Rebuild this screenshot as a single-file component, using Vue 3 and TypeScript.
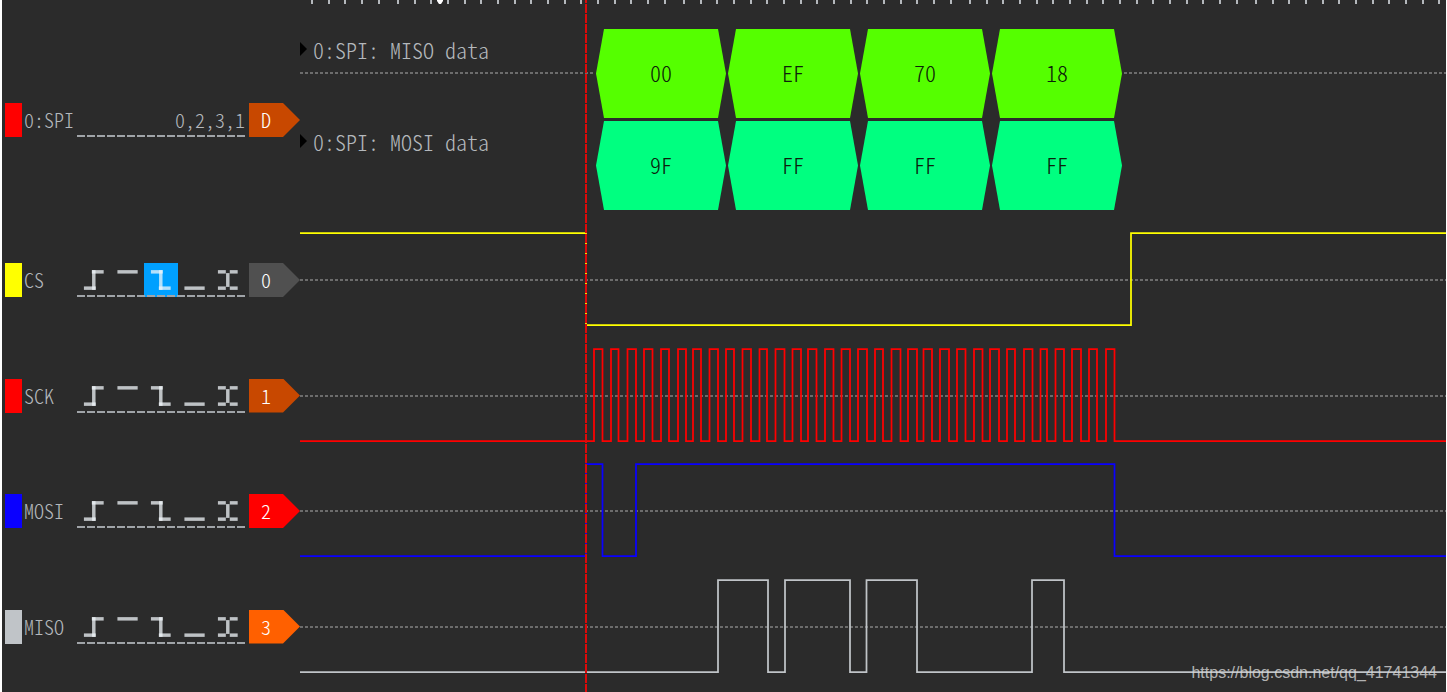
<script setup lang="ts">
import { ref } from 'vue'

type Trigger = 'rising' | 'high' | 'falling' | 'low' | 'either'

interface Channel {
  name: string
  index: number
  color: string
  badge: string
  trigger: Trigger | null
  startHigh: boolean
  edges: number[]
}

interface Lane {
  title: string
  kind: string
  bytes: string[]
}

const triggers: { id: Trigger; label: string; strokes: string[] }[] = [
  { id: 'rising', label: 'Rising edge', strokes: ['M7 25.25H19', 'M17 7V27', 'M15 8.75H27'] },
  { id: 'high', label: 'High level', strokes: ['M6.5 8.75H27'] },
  { id: 'falling', label: 'Falling edge', strokes: ['M7 8.75H19', 'M17 7V27', 'M15 25.25H27'] },
  { id: 'low', label: 'Low level', strokes: ['M6.5 25.25H27'] },
  {
    id: 'either',
    label: 'Either edge',
    strokes: ['M7 8.75H15', 'M19 8.75H27', 'M17 10V24', 'M7 25.25H15', 'M19 25.25H27'],
  },
]

const clockRises = [
  294, 311, 327.5, 344, 361, 378, 393, 409.5, 426, 442.5, 459.5, 475.5, 492.5, 508, 525, 541.5,
  558, 575, 591.5, 608, 623.5, 640, 657, 674, 690, 707, 724, 740.5, 755.5, 772, 789, 806,
]
const clockFalls = [
  302.5, 318.5, 336, 352.5, 369, 386, 401, 418, 434, 451, 467, 484.5, 501, 516.5, 533.5, 550,
  567, 583, 600.5, 617, 632, 649, 665.5, 682.5, 699, 715, 732.5, 747, 764, 781, 797, 814.5,
]

const channels = ref<Channel[]>([
  { name: 'CS', index: 0, color: '#ffff00', badge: '#505050', trigger: 'falling', startHigh: true, edges: [286, 831] },
  { name: 'SCK', index: 1, color: '#ff0000', badge: '#c84800', trigger: null, startHigh: false, edges: clockRises.flatMap((rise, i) => [rise, clockFalls[i]]) },
  { name: 'MOSI', index: 2, color: '#0a00ff', badge: '#ff0000', trigger: null, startHigh: false, edges: [286, 302.5, 336, 814.5] },
  { name: 'MISO', index: 3, color: '#c0c4c8', badge: '#ff6000', trigger: null, startHigh: false, edges: [418, 468, 485, 550, 566.5, 617, 732, 764] },
])

const lanes: Lane[] = [
  { title: '0:SPI: MISO data', kind: 'miso', bytes: ['00', 'EF', '70', '18'] },
  { title: '0:SPI: MOSI data', kind: 'mosi', bytes: ['9F', 'FF', 'FF', 'FF'] },
]

const END = 6000
const HIGH = 11
const LOW = 103

function tracePath(c: Channel): string {
  let level = c.startHigh
  let d = `M0 ${level ? HIGH : LOW}`
  for (const x of c.edges) {
    level = !level
    d += `H${x}V${level ? HIGH : LOW}`
  }
  return `${d}H${END}`
}

const ticks: number[] = []
for (let group = -189; group < END; group += 286) {
  for (let i = 0; i < 17; i++) {
    const x = group + Math.round((i * 50) / 3)
    if (x > 0) ticks.push(x)
  }
}
const tickPath = ticks.map((x) => `M${x + 1} 0V4`).join('')

function pick(channel: Channel, id: Trigger) {
  channel.trigger = channel.trigger === id ? null : id
}
</script>

<template>
  <main class="analyzer">
    <header class="ruler">
      <svg class="scale" aria-hidden="true">
        <path :d="tickPath" class="tick" />
        <path d="M137 0H143V1L141 4H139L137 1Z" class="marker" />
      </svg>
    </header>

    <section class="row decoder">
      <div class="panel">
        <i class="swatch spi"></i>
        <span class="name">0:SPI</span>
        <div class="settings"><span class="pins">0,2,3,1</span></div>
        <span class="badge spi-badge">D</span>
      </div>
      <div class="lanes">
        <div v-for="lane in lanes" :key="lane.title" class="lane" :class="lane.kind">
          <div class="idle lead">
            <i class="arrow"></i>
            <span class="title">{{ lane.title }}</span>
          </div>
          <div class="bytes">
            <span v-for="(byte, i) in lane.bytes" :key="i" class="byte">{{ byte }}</span>
          </div>
          <div class="idle rest"></div>
        </div>
      </div>
    </section>

    <section class="channels">
      <div v-for="channel in channels" :key="channel.name" class="row">
        <div class="panel">
          <i class="swatch" :style="{ background: channel.color }"></i>
          <span class="name">{{ channel.name }}</span>
          <div class="settings">
            <button
              v-for="t in triggers"
              :key="t.id"
              type="button"
              class="trigger"
              :class="{ active: channel.trigger === t.id }"
              :aria-label="t.label"
              :aria-pressed="channel.trigger === t.id"
              @click="pick(channel, t.id)"
            >
              <svg viewBox="0 0 34 34" width="34" height="34">
                <path v-for="d in t.strokes" :key="d" :d="d" />
              </svg>
            </button>
          </div>
          <span class="badge" :style="{ background: channel.badge }">{{ channel.index }}</span>
        </div>
        <svg class="trace" aria-hidden="true">
          <path :d="`M0 58H${END}`" class="middle" />
          <path :d="tracePath(channel)" :stroke="channel.color" class="signal" />
        </svg>
      </div>
    </section>

    <div class="cursor"></div>
    <p class="watermark">https://blog.csdn.net/qq_41741344</p>
  </main>
</template>

<style>
body {
  background: #2b2b2b;
}
</style>

<style scoped>
.analyzer {
  position: relative;
  box-sizing: border-box;
  min-height: 100vh;
  overflow: hidden;
  border-left: 2px solid #fff;
  border-right: 1px solid #fff;
  background: #2b2b2b;
  color: #b4b8bc;
  font-family: 'Noto Sans CJK SC', 'Liberation Mono', monospace;
  font-feature-settings: 'hwid';
  font-size: 20px;
  font-weight: 300;
  line-height: 24px;
}

.ruler {
  height: 18px;
  padding-left: 298px;
}

.scale {
  display: block;
  width: 100%;
  height: 4px;
}

.tick {
  stroke: #b4b8bc;
  stroke-width: 2;
}

.marker {
  fill: #fff;
}

.row {
  display: grid;
  grid-template-columns: 298px minmax(0, 1fr);
}

.decoder {
  height: 204px;
}

.channels {
  display: grid;
  grid-template-rows: 116px 115px 116px 115px;
}

.panel {
  display: flex;
  align-items: center;
  padding-left: 3px;
}

.swatch {
  width: 17px;
  height: 34px;
}

.spi {
  background: #ff0000;
}

.name {
  width: 53px;
  padding-left: 2px;
}

.settings {
  position: relative;
  display: flex;
  align-items: center;
  justify-content: flex-end;
  width: 168px;
  height: 34px;
}

.settings::after {
  content: '';
  position: absolute;
  left: 0;
  right: 0;
  bottom: 0;
  height: 2px;
  background: repeating-linear-gradient(to right, #a0a4a8 0 8px, transparent 8px 10px);
}

.trigger {
  flex: 1;
  height: 34px;
  padding: 0;
  border: 0;
  background: none;
  cursor: pointer;
}

.trigger.active {
  background: #00a0ff;
}

.trigger svg {
  display: block;
  width: 100%;
}

.trigger path {
  fill: none;
  stroke: rgba(240, 246, 250, 0.75);
  stroke-width: 3.5;
}

.badge {
  box-sizing: border-box;
  width: 51px;
  height: 34px;
  margin-left: auto;
  padding-right: 17px;
  clip-path: polygon(0 0, 34px 0, 100% 50%, 34px 100%, 0 100%);
  color: #fff;
  line-height: 34px;
  text-align: center;
}

.spi-badge {
  background: #c84800;
}

.lanes {
  display: flex;
  flex-direction: column;
  gap: 3px;
  padding-top: 11px;
}

.lane {
  display: flex;
  height: 89px;
  font-size: 22px;
}

.idle {
  display: flex;
  align-items: flex-start;
}

.miso .idle {
  background: repeating-linear-gradient(to right, #6c6c6c 0 3px, transparent 3px 5px) 0 43px / 100% 2px no-repeat;
}

.lead {
  width: 293px;
}

.rest {
  flex: 1;
  margin-left: 2px;
}

.arrow {
  width: 7px;
  height: 14px;
  margin-top: 13px;
  background: #000;
  clip-path: polygon(0 0, 100% 50%, 0 100%);
}

.title {
  margin-top: 8px;
  padding-left: 6px;
  white-space: nowrap;
}

.bytes {
  display: flex;
  gap: 2px;
  margin-left: 3px;
}

.byte {
  width: 130px;
  clip-path: polygon(8px 0, 122px 0, 100% 50%, 122px 100%, 8px 100%, 0 50%);
  color: #0c200a;
  line-height: 87px;
  text-align: center;
}

.miso .byte {
  background: #55ff00;
}

.mosi .byte {
  background: #00ff80;
}

.trace {
  display: block;
  width: 100%;
  height: 115px;
}

.middle {
  stroke: #6c6c6c;
  stroke-width: 2;
  stroke-dasharray: 3 2;
}

.signal {
  fill: none;
  stroke-width: 1.75;
}

.cursor {
  position: absolute;
  top: 0;
  bottom: 0;
  left: 583px;
  width: 2px;
  background: repeating-linear-gradient(to bottom, #dc0a0a 0 3px, transparent 3px 4px, #dc0a0a 4px 10px);
}

.watermark {
  position: absolute;
  right: 9px;
  bottom: 9px;
  margin: 0;
  color: rgba(215, 215, 215, 0.8);
  font-family: 'Liberation Sans', Arial, sans-serif;
  font-size: 16px;
  line-height: 20px;
}
</style>
